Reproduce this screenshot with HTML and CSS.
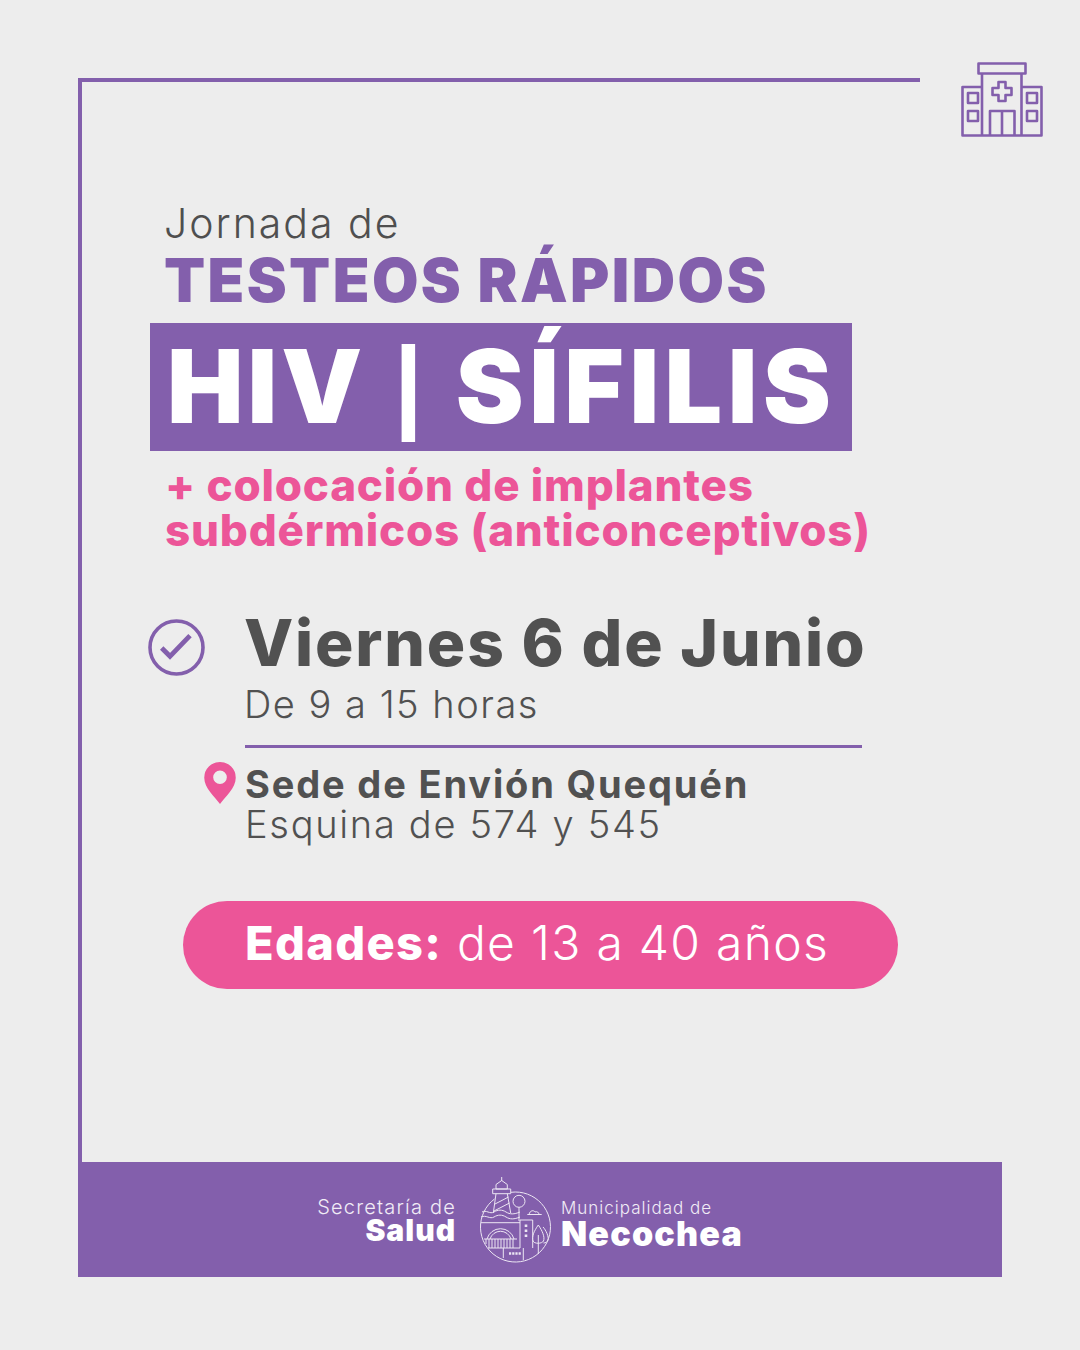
FILE: index.html
```html
<!DOCTYPE html>
<html lang="es">
<head>
<meta charset="utf-8">
<title>Jornada de testeos rápidos</title>
<link rel="stylesheet" href="styles.css">
</head>
<body>
<main class="page">
  <svg class="hospital" viewBox="0 0 82 75" fill="none" stroke="#835fac" stroke-width="2.6" stroke-linejoin="round">
    <rect x="17.500" y="1.500" width="47" height="10"/>
    <path d="M21 11.500V73.500M60.500 11.500V73.500"/>
    <path d="M21 25H1.500V73.500H80.500V25H60.500"/>
    <rect x="7" y="31" width="10" height="10"/><rect x="7" y="49" width="10" height="10"/>
    <rect x="66" y="31" width="10" height="10"/><rect x="66" y="49" width="10" height="10"/>
    <path d="M37.500 20H44.500V26H50.500V33H44.500V39H37.500V33H31.500V26H37.500Z"/>
    <path d="M29 73.500V49H53.500V73.500M41 49V73.500"/>
  </svg>
  <section class="frame">
    <header class="heading">
      <p class="intro">Jornada de</p>
      <h1 class="title">TESTEOS RÁPIDOS</h1>
    </header>
    <div class="band">HIV <span class="bar">|</span> <span class="band-word">SÍFILIS</span></div>
    <p class="extra">+ colocación de implantes<br>subdérmicos (anticonceptivos)</p>
    <div class="when">
      <svg class="check" viewBox="0 0 58 58" fill="none" stroke="#835fac">
        <circle cx="28.500" cy="28.500" r="26.500" stroke-width="3.600"/>
        <path d="M13.700 29L22 37.300L42 16.700" stroke-width="4.800"/>
      </svg>
      <div class="when-text">
        <h2 class="date">Viernes 6 de Junio</h2>
        <p class="hours">De 9 a 15 horas</p>
      </div>
    </div>
    <div class="where">
      <svg class="pin" viewBox="1 1 30 40">
        <path fill="#ec5598" fill-rule="evenodd" d="M16 41C11 34 1 26 1 16a15 15 0 0 1 30 0C31 26 21 34 16 41ZM16 9a6.500 6.500 0 1 0 0 13a6.500 6.500 0 0 0 0-13Z"/>
      </svg>
      <p class="place"><strong>Sede de Envión Quequén</strong><br>Esquina de 574 y 545</p>
    </div>
    <p class="pill"><strong>Edades:</strong> de 13 a 40 años</p>
  </section>
  <footer class="footer">
    <p class="org org-left">Secretaría de<br><strong>Salud</strong></p>
    <svg class="crest" viewBox="0 0 72 86" fill="none" stroke="#ece6f3" stroke-width="1">
      <path d="M14.500 22A35 35 0 1 0 31 15.300"/>
      <path d="M21.700 0V4M16 7.500L21.700 3.500L27.300 7.500V12H16ZM12.700 12H30.700V16.700H12.700ZM16 16.700L13.300 36M27.300 16.700L30.700 36M15 27L28.500 20M14 34L29.500 26"/>
      <circle cx="39" cy="24.300" r="6"/>
      <path d="M39 30.300V44"/>
      <path d="M2 35C6 32.500 10 37.500 14 35S22 32.500 26 35S34 37.500 40 35M1 40C6 37.500 10 42.500 14 40S22 37.500 26 40S34 42.500 40 40M1 45.700H40"/>
      <path d="M47.300 37.500H61.700M49 37.500C50 33 54 33 55 35C57 34 59 35.500 59 37.500"/>
      <path d="M40 43H52.700V71M40 43V71"/>
      <path d="M46 47.500V50M46 52.500V55M46 57.500V60" stroke-width="2.600"/>
      <path d="M58.300 48C54 54 51.500 60 53 64C54 67 62 67 63.500 64C65 60 62.500 54 58.300 48ZM58.300 58V77"/>
      <path d="M63 50C66 53 69 60 68 63C67.500 65 65.500 66 63.500 66"/>
      <path d="M7 62A14 14 0 0 1 34 62M10 62A11 11 0 0 1 31 62M4 62H37"/>
      <path d="M6 62V67M9 62V71M12 62V71M15 62V71M18 62V71M21 62V71M24 62V71M27 62V71M30 62V71M33 62V71M8 71H40"/>
      <path d="M23.300 71V81M43.300 71V83"/>
      <path d="M29 76.500H41" stroke-width="2.600" stroke-dasharray="2.200 1"/>
    </svg>
    <p class="org org-right">Municipalidad de<br><strong>Necochea</strong></p>
  </footer>
</main>
</body>
</html>
```

FILE: styles.css
```css
* { box-sizing: border-box; }
html, body { margin: 0; padding: 0; }
body { background: #ededed; font-family: Inter, "Liberation Sans", sans-serif; color: #515151; }
p, h1, h2 { margin: 0; font-weight: inherit; }
strong { font-weight: 800; }

.page { position: relative; width: 1080px; height: 1350px; padding: 78px 0 0 78px; overflow: hidden; }
.hospital { position: absolute; left: 961px; top: 62px; width: 82px; height: 75px; }

.frame {
  width: 842px;
  height: 1084px;
  border-top: 4px solid #835fac;
  border-left: 4px solid #835fac;
  padding: 117px 0 0 83px;
}
.intro { font-size: 41px; font-weight: 300; line-height: 49px; color: #4f4f4f; letter-spacing: 2px; margin-left: -1px; }
.title { font-size: 60px; font-weight: 900; line-height: 64px; color: #835fac; letter-spacing: 2.400px; white-space: nowrap; margin-left: -1px; }

.band {
  width: 702px;
  height: 128px;
  margin: 11px 0 0 -15px;
  padding-left: 17px;
  background: #835fac;
  color: #fff;
  font-size: 102px;
  font-weight: 900;
  line-height: 126px;
  letter-spacing: 4px;
  white-space: nowrap;
}
.bar { margin-left: 2px; font-size: 82px; font-weight: 800; letter-spacing: 0; }
.band-word { margin-left: 7px; letter-spacing: 5.500px; }
.extra { margin-top: 12px; font-size: 44px; font-weight: 800; line-height: 45px; color: #ec5598; letter-spacing: 0.800px; white-space: nowrap; }

.when { display: flex; align-items: flex-start; margin: 52px 0 0 -17px; }
.check { width: 58px; height: 58px; margin-top: 14px; flex: none; }
.when-text { margin-left: 39px; width: 617px; border-bottom: 3px solid #835fac; padding-bottom: 18px; }
.date { font-size: 64px; font-weight: 800; line-height: 76px; letter-spacing: 1.850px; white-space: nowrap; margin-left: -1px; }
.hours { font-size: 38px; font-weight: 300; line-height: 46px; letter-spacing: 1.500px; margin-left: -1px; }

.where { display: flex; align-items: flex-start; margin: 16px 0 0 39px; }
.pin { width: 32px; height: 42px; margin-top: -2px; flex: none; }
.place { margin-left: 9px; font-size: 38px; font-weight: 300; line-height: 40px; letter-spacing: 1.700px; white-space: nowrap; }
.place strong { font-weight: 700; letter-spacing: 1.850px; }

.pill {
  width: 715px;
  height: 88px;
  margin: 57px 0 0 18px;
  padding-left: 62px;
  border-radius: 44px;
  background: #ec5598;
  color: #fff;
  font-size: 48px;
  font-weight: 300;
  line-height: 84px;
  letter-spacing: 1.300px;
  white-space: nowrap;
}
.pill strong { font-size: 47px; }

.footer {
  width: 924px;
  height: 115px;
  background: #835fac;
  color: #f1ecf6;
  display: grid;
  grid-template-columns: 378px 72px auto;
  align-items: center;
}
.org { font-weight: 300; white-space: nowrap; }
.org-left { margin-top: 3px; text-align: right; font-size: 20px; line-height: 23px; letter-spacing: 1.200px; }
.org-left strong { font-size: 30px; font-weight: 900; color: #fff; letter-spacing: 1px; }
.org-right { margin: 8px 0 0 33px; font-size: 17px; line-height: 26px; letter-spacing: 1px; }
.org-right strong { font-size: 34px; font-weight: 900; color: #fff; letter-spacing: 1.200px; }
.crest { width: 72px; height: 86px; margin-left: 24px; }
```
